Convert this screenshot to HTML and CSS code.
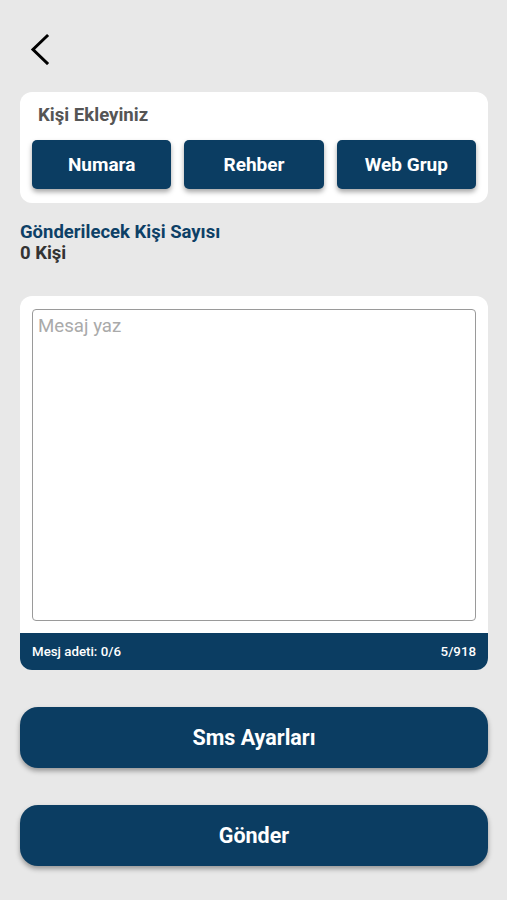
FILE: index.html
```html
<!DOCTYPE html>
<html lang="tr">
<head>
<meta charset="utf-8">
<link rel="stylesheet" href="styles.css">
</head>
<body>
<div class="screen">
  <header class="topbar">
    <svg class="back" width="22" height="32" viewBox="0 0 22 32"><path d="M17 3 L3 16.5 L17 30" fill="none" stroke="#000" stroke-width="3" stroke-linecap="square"/></svg>
  </header>
  <section class="card contacts">
    <div class="card-title">Kişi Ekleyiniz</div>
    <div class="btn-row">
      <button class="btn small">Numara</button>
      <button class="btn small">Rehber</button>
      <button class="btn small">Web Grup</button>
    </div>
  </section>
  <div class="count">
    <div class="count-label">Gönderilecek Kişi Sayısı</div>
    <div class="count-value">0 Kişi</div>
  </div>
  <section class="card message">
    <div class="msg-body">
      <div class="textarea"><span class="placeholder">Mesaj yaz</span></div>
    </div>
    <div class="msg-footer">
      <span>Mesj adeti: 0/6</span>
      <span>5/918</span>
    </div>
  </section>
  <button class="btn big first">Sms Ayarları</button>
  <button class="btn big second">Gönder</button>
</div>
</body>
</html>
```
FILE: styles.css
```css
* { box-sizing: border-box; }
html, body { margin: 0; padding: 0; }
body {
  background: #e8e8e8;
  font-family: Roboto, "Noto Sans", sans-serif;
  width: 507px;
  height: 900px;
  overflow: hidden;
}
.screen {
  padding: 0 19px 0 20px;
  display: flex;
  flex-direction: column;
}
.topbar {
  height: 92px;
  padding-top: 33px;
  padding-left: 10px;
}
.back { display: block; }
.card {
  background: #fff;
  border-radius: 12px;
}
.contacts {
  padding: 12px 12px 14px 12px;
}
.card-title {
  font-size: 18.6px;
  font-weight: 700;
  color: #555;
  padding-left: 6px;
  line-height: 22px;
  height: 36px;
}
.btn-row {
  display: grid;
  grid-template-columns: 1fr 1fr 1fr;
  gap: 13px;
}
.btn {
  border: none;
  background: #0b3d62;
  color: #fff;
  font-family: Roboto, "Noto Sans", sans-serif;
  font-weight: 700;
  cursor: pointer;
  box-shadow: 0 3px 5px rgba(0,0,0,0.35);
}
.btn.small {
  height: 49px;
  border-radius: 5px;
  font-size: 19px;
}
.count {
  padding-top: 18px;
  height: 93px;
}
.count-label {
  color: #0d4066;
  font-size: 18.5px;
  font-weight: 700;
  line-height: 22px;
}
.count-value {
  color: #333;
  font-size: 18.5px;
  font-weight: 700;
  line-height: 20px;
}
.message {
  overflow: hidden;
}
.msg-body {
  padding: 13px 12px 12px 12px;
}
.textarea {
  height: 312px;
  border: 1.5px solid #9a9a9a;
  border-radius: 4px;
  padding: 5px 5px;
}
.placeholder {
  color: #aaa;
  font-size: 18.7px;
  line-height: 22px;
}
.msg-footer {
  background: #0b3d62;
  height: 37px;
  display: flex;
  justify-content: space-between;
  align-items: center;
  padding: 0 12px;
  color: #fff;
  font-size: 13.3px;
  font-weight: 500;
}
.btn.big {
  height: 61px;
  border-radius: 18px;
  font-size: 21.5px;
}
.btn.first { margin-top: 37px; }
.btn.second { margin-top: 37px; }
```
